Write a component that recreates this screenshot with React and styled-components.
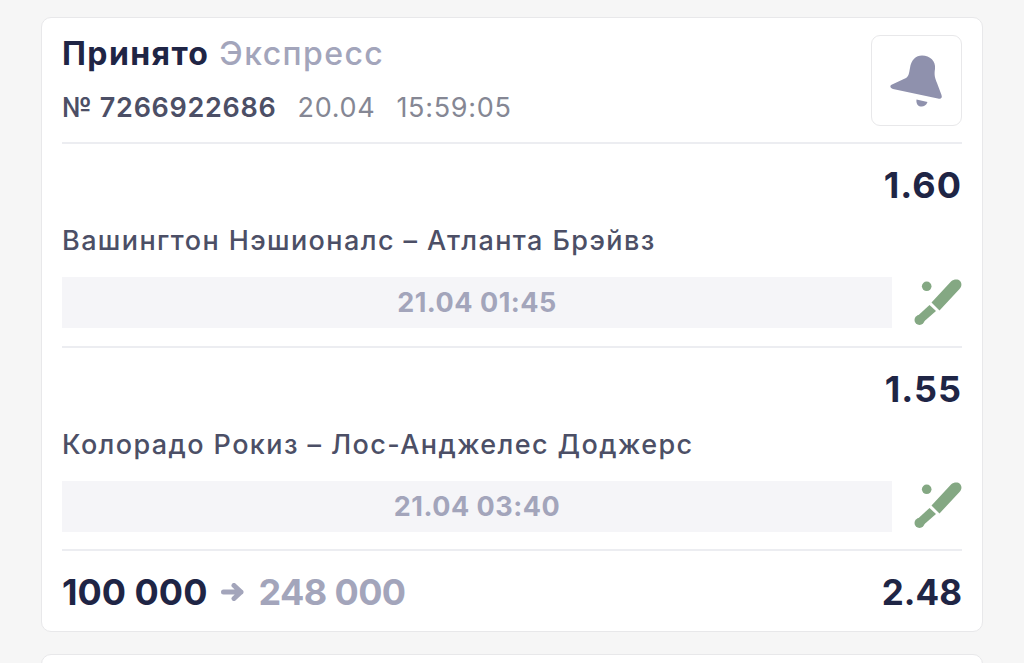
import React from "react";
import styled, { createGlobalStyle } from "styled-components";

const GlobalStyle = createGlobalStyle`
    html, body {
        margin: 0;
        padding: 0;
        background-color: #f6f6f6;
    }
`;

const Page = styled.div`
    display: flex;
    flex-direction: column;
    gap: 22px;
    box-sizing: border-box;
    height: 100vh;
    overflow: hidden;
    padding: 17px 41px 0 41px;
    font-family: Inter, "Noto Sans", sans-serif;
    color: #1f2545;
`;

const Card = styled.div`
    flex-shrink: 0;
    box-sizing: border-box;
    background-color: #fff;
    border: 1px solid #e8e8ea;
    border-radius: 10px;
    padding: 17px 20px 0 20px;
    height: ${(p) => p.$height}px;
`;

const Header = styled.div`
    display: flex;
    justify-content: space-between;
    box-sizing: border-box;
    height: 109px;
    border-bottom: 2px solid #ecedf1;
`;

const Title = styled.div`
    font-size: 32px;
    line-height: 38px;
    font-weight: 500;
    letter-spacing: 1.4px;
    color: #a3a5bb;
`;

const Strong = styled.span`
    font-weight: 700;
    color: #1f2545;
`;

const Meta = styled.div`
    display: flex;
    gap: 21px;
    margin-top: 20px;
    font-size: 27px;
    line-height: 30px;
    letter-spacing: 0.7px;
    color: #858794;
`;

const TicketNumber = styled.span`
    font-weight: 600;
    color: #4c4f66;
`;

const BellButton = styled.div`
    display: flex;
    align-items: center;
    justify-content: center;
    box-sizing: border-box;
    width: 91px;
    height: 91px;
    border: 1px solid #e8e8ea;
    border-radius: 9px;
`;

const Event = styled.div`
    display: flex;
    flex-direction: column;
    box-sizing: border-box;
    height: 203.5px;
    border-bottom: 2px solid #ecedf1;
`;

const Odds = styled.div`
    align-self: flex-end;
    margin-top: 20px;
    font-size: 36px;
    line-height: 42px;
    font-weight: 700;
    letter-spacing: 1px;
    color: #1f2545;
`;

const Teams = styled.div`
    margin-top: 18px;
    font-size: 27px;
    line-height: 34px;
    font-weight: 500;
    letter-spacing: 1.4px;
    color: #4c4f66;
`;

const TimeRow = styled.div`
    display: flex;
    align-items: center;
    justify-content: space-between;
    margin-top: 19px;
`;

const TimeBar = styled.div`
    display: flex;
    align-items: center;
    justify-content: center;
    width: 830px;
    height: 51px;
    background-color: #f5f5f8;
    font-size: 27px;
    font-weight: 700;
    letter-spacing: 0.5px;
    color: #a3a5bb;
`;

const Footer = styled.div`
    display: flex;
    align-items: center;
    justify-content: space-between;
    height: 82px;
`;

const Sum = styled.div`
    display: flex;
    align-items: center;
    gap: 14px;
    font-size: 36px;
    font-weight: 700;
    color: #a3a5bb;
`;

const Stake = styled.span`
    color: #1f2545;
`;

const Payout = styled.span`
    letter-spacing: -0.6px;
`;

const Total = styled.div`
    font-size: 35px;
    font-weight: 700;
    color: #1f2545;
`;

const BellIcon = () => (
    <svg width="60" height="60" viewBox="0 0 60 60">
        <g fill="#8f91ad">
            <path d="M4 34 L 19 27 C 22 25 22 22 23 17 C 24 9 29 4.5 35 4.5 C 43 4.5 49 10 48 18 C 47 24 48 27 50 32 L 54.5 44 C 55.5 47 54 48 52 47.7 L 6 38 C 3 37 3 35 4 34 Z" />
            <path d="M29.5 48.5 L 40.5 51 C 39 55 36 56 33.5 55.5 C 30.5 55 29 52 29.5 48.5 Z" />
        </g>
    </svg>
);

const BatIcon = () => (
    <svg width="48" height="48" viewBox="0 0 48 48">
        <g fill="#84a883">
            <circle cx="12.7" cy="7.3" r="4.8" />
            <path d="M17.5 23.5 L 37 2.5 C 40 0 44 0 46 2 C 48 4 48 7.5 45.5 10 L 25.5 31.5 Z" />
            <path d="M15.5 26 L 22 32 L 10 42.5 L 3.5 37 Z" />
            <circle cx="5.5" cy="41" r="5" />
        </g>
    </svg>
);

const ArrowIcon = () => (
    <svg width="23" height="18" viewBox="0 0 23 18">
        <path d="M2.5 9 H 20 M 13 2.5 L 20 9 L 13 15.5" fill="none" stroke="#a3a5bb" strokeWidth="5" strokeLinecap="round" strokeLinejoin="round" />
    </svg>
);

const events = [
    { odds: "1.60", teams: "Вашингтон Нэшионалс – Атланта Брэйвз", time: "21.04 01:45" },
    { odds: "1.55", teams: "Колорадо Рокиз – Лос-Анджелес Доджерс", time: "21.04 03:40" },
];

export default function App() {
    return (
        <Page>
            <GlobalStyle />
            <Card $height={615}>
                <Header>
                    <div>
                        <Title>
                            <Strong>Принято</Strong> Экспресс
                        </Title>
                        <Meta>
                            <TicketNumber>№ 7266922686</TicketNumber>
                            <span>20.04</span>
                            <span>15:59:05</span>
                        </Meta>
                    </div>
                    <BellButton>
                        <BellIcon />
                    </BellButton>
                </Header>
                {events.map((e) => (
                    <Event key={e.time}>
                        <Odds>{e.odds}</Odds>
                        <Teams>{e.teams}</Teams>
                        <TimeRow>
                            <TimeBar>{e.time}</TimeBar>
                            <BatIcon />
                        </TimeRow>
                    </Event>
                ))}
                <Footer>
                    <Sum>
                        <Stake>100 000</Stake>
                        <ArrowIcon />
                        <Payout>248 000</Payout>
                    </Sum>
                    <Total>2.48</Total>
                </Footer>
            </Card>
            <Card $height={100} />
        </Page>
    );
}
